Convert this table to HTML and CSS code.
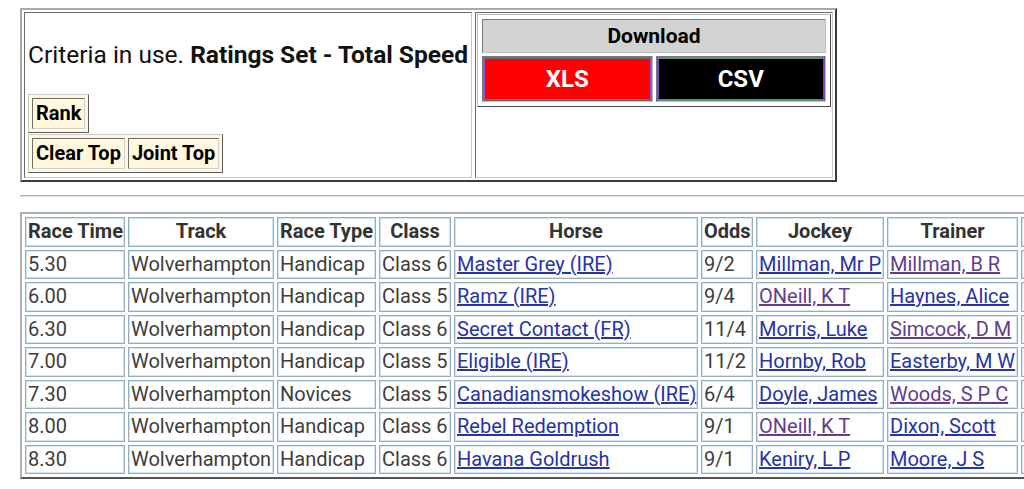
FILE: index.html
```html
<!DOCTYPE html>
<html lang="en">
<head>
<meta charset="utf-8">
<title>Ratings - Total Speed</title>
<link rel="stylesheet" href="styles.css">
</head>
<body>
<div class="page">
  <div class="top-panel">
    <div class="criteria-cell">
      <p class="criteria">Criteria in use. <b>Ratings Set - Total Speed</b></p>
      <div class="btn-group rank-group"><span class="btn">Rank</span></div>
      <div class="btn-group"><span class="btn">Clear Top</span><span class="btn">Joint Top</span></div>
    </div>
    <div class="download-cell">
      <div class="download-box">
        <div class="download-head">Download</div>
        <div class="download-row">
          <div class="dl-cell"><a class="dl-btn xls" href="#">XLS</a></div>
          <div class="dl-cell"><a class="dl-btn csv" href="#">CSV</a></div>
        </div>
      </div>
    </div>
  </div>
  <hr class="divider">
  <div class="table-wrap">
    <table class="races">
      <thead>
        <tr>
          <th class="c-time">Race Time</th>
          <th class="c-track">Track</th>
          <th class="c-type">Race Type</th>
          <th class="c-class">Class</th>
          <th class="c-horse">Horse</th>
          <th class="c-odds">Odds</th>
          <th class="c-jockey">Jockey</th>
          <th class="c-trainer">Trainer</th>
          <th class="c-extra"></th>
        </tr>
      </thead>
      <tbody>
        <tr><td>5.30</td><td>Wolverhampton</td><td>Handicap</td><td>Class 6</td><td><a href="#">Master Grey (IRE)</a></td><td>9/2</td><td><a href="#">Millman, Mr P</a></td><td><a class="visited" href="#">Millman, B R</a></td><td></td></tr>
        <tr><td>6.00</td><td>Wolverhampton</td><td>Handicap</td><td>Class 5</td><td><a href="#">Ramz (IRE)</a></td><td>9/4</td><td><a class="visited" href="#">ONeill, K T</a></td><td><a href="#">Haynes, Alice</a></td><td></td></tr>
        <tr><td>6.30</td><td>Wolverhampton</td><td>Handicap</td><td>Class 6</td><td><a href="#">Secret Contact (FR)</a></td><td>11/4</td><td><a href="#">Morris, Luke</a></td><td><a class="visited" href="#">Simcock, D M</a></td><td></td></tr>
        <tr><td>7.00</td><td>Wolverhampton</td><td>Handicap</td><td>Class 5</td><td><a href="#">Eligible (IRE)</a></td><td>11/2</td><td><a href="#">Hornby, Rob</a></td><td><a href="#">Easterby, M W</a></td><td></td></tr>
        <tr><td>7.30</td><td>Wolverhampton</td><td>Novices</td><td>Class 5</td><td><a href="#">Canadiansmokeshow (IRE)</a></td><td>6/4</td><td><a href="#">Doyle, James</a></td><td><a class="visited" href="#">Woods, S P C</a></td><td></td></tr>
        <tr><td>8.00</td><td>Wolverhampton</td><td>Handicap</td><td>Class 6</td><td><a href="#">Rebel Redemption</a></td><td>9/1</td><td><a class="visited" href="#">ONeill, K T</a></td><td><a href="#">Dixon, Scott</a></td><td></td></tr>
        <tr><td>8.30</td><td>Wolverhampton</td><td>Handicap</td><td>Class 6</td><td><a href="#">Havana Goldrush</a></td><td>9/1</td><td><a href="#">Keniry, L P</a></td><td><a href="#">Moore, J S</a></td><td></td></tr>
      </tbody>
    </table>
  </div>
</div>
</body>
</html>
```

FILE: styles.css
```css
html, body {
  margin: 0;
  padding: 0;
  background: #ffffff;
}

body {
  font-family: Roboto, "Liberation Sans", Arial, sans-serif;
  color: #111;
  overflow: hidden;
}

.page {
  padding: 8px 0 0 20px;
}

/* ---------- top panel ---------- */
.top-panel {
  display: flex;
  gap: 3px;
  width: fit-content;
  padding: 2px;
  border: 2px solid;
  border-color: #a8a8a8 #3a3a3a #3a3a3a #a8a8a8;
}

.criteria-cell {
  box-sizing: border-box;
  width: 448px;
  height: 166px;
  padding: 0 3px;
  border: 1px solid;
  border-color: #6a6a6a #c8c8c8 #c8c8c8 #6a6a6a;
  display: flex;
  flex-direction: column;
  align-items: flex-start;
}

.criteria {
  margin: 28px 0 25px;
  font-size: 24.5px;
  line-height: 28px;
  white-space: nowrap;
  color: #111;
}

.criteria b {
  font-weight: 700;
}

.btn-group {
  display: flex;
  gap: 3px;
  padding: 3px;
  background: #fff8dc;
  border: 1px solid;
  border-color: #c9c9c9 #5a5a5a #5a5a5a #c9c9c9;
}

.rank-group {
  margin-bottom: 1px;
}

.btn {
  display: block;
  padding: 0 3px;
  font-size: 20px;
  font-weight: 700;
  line-height: 29px;
  color: #000;
  border: 1px solid;
  border-color: #6e6e6e #d0d0d0 #d0d0d0 #6e6e6e;
}

.download-cell {
  box-sizing: border-box;
  width: 358px;
  height: 166px;
  padding: 1px;
  border: 1px solid;
  border-color: #6a6a6a #c8c8c8 #c8c8c8 #6a6a6a;
}

.download-box {
  display: flex;
  flex-direction: column;
  gap: 3px;
  padding: 4px;
  border: 1px solid;
  border-color: #b8b8b8 #4a4a4a #4a4a4a #b8b8b8;
}

.download-head {
  box-sizing: border-box;
  height: 34px;
  background: #d3d3d3;
  border: 1px solid;
  border-color: #7a7a7a #c0c0c0 #c0c0c0 #7a7a7a;
  font-size: 21px;
  font-weight: 700;
  line-height: 32px;
  text-align: center;
  color: #000;
}

.download-row {
  display: grid;
  grid-template-columns: 1fr 1fr;
  gap: 3px;
}

.dl-cell {
  box-sizing: border-box;
  height: 46px;
  border: 1px solid;
  border-color: #7a7a7a #c0c0c0 #c0c0c0 #7a7a7a;
}

.dl-btn {
  display: block;
  border: 2px solid;
  font-size: 24px;
  font-weight: 700;
  line-height: 40px;
  text-align: center;
  color: #ffffff;
  text-decoration: none;
}

.dl-btn.xls {
  background: #ff0000;
  border-color: #6e6e6e #9155d0 #6e6e6e #9155d0;
}

.dl-btn.csv {
  background: #000000;
  border-color: #5f8c8c #7a44c0 #5f8c8c #7a44c0;
}

/* ---------- divider ---------- */
.divider {
  height: 0;
  margin: 13px 0 15px;
  border: 0;
  border-top: 1px solid #b4b4b4;
  border-bottom: 1px solid #dedede;
}

/* ---------- race table ---------- */
.table-wrap {
  overflow: hidden;
}

.races {
  table-layout: fixed;
  width: 1106px;
  border-collapse: separate;
  border-spacing: 3px;
  border: 2px solid;
  border-color: #b0b0b0 #555 #555 #b0b0b0;
  font-size: 20px;
}

.races th,
.races td {
  box-sizing: border-box;
  padding: 1px 2px;
  line-height: 25.5px;
  white-space: nowrap;
  overflow: hidden;
  border: 1px solid #98adbb;
  box-shadow: inset 0 0 0 1px #d3e5ef;
  color: #3d3d3d;
  text-align: left;
}

.races th {
  font-weight: 700;
  text-align: center;
  color: #333;
}

.races a {
  color: #2733a8;
  text-decoration: underline;
}

.races a.visited {
  color: #633d8e;
}

.c-time { width: 100px; }
.c-track { width: 146px; }
.c-type { width: 99px; }
.c-class { width: 72px; }
.c-horse { width: 244px; }
.c-odds { width: 52px; }
.c-jockey { width: 128px; }
.c-trainer { width: 131px; }
.c-extra { width: 100px; }
```
